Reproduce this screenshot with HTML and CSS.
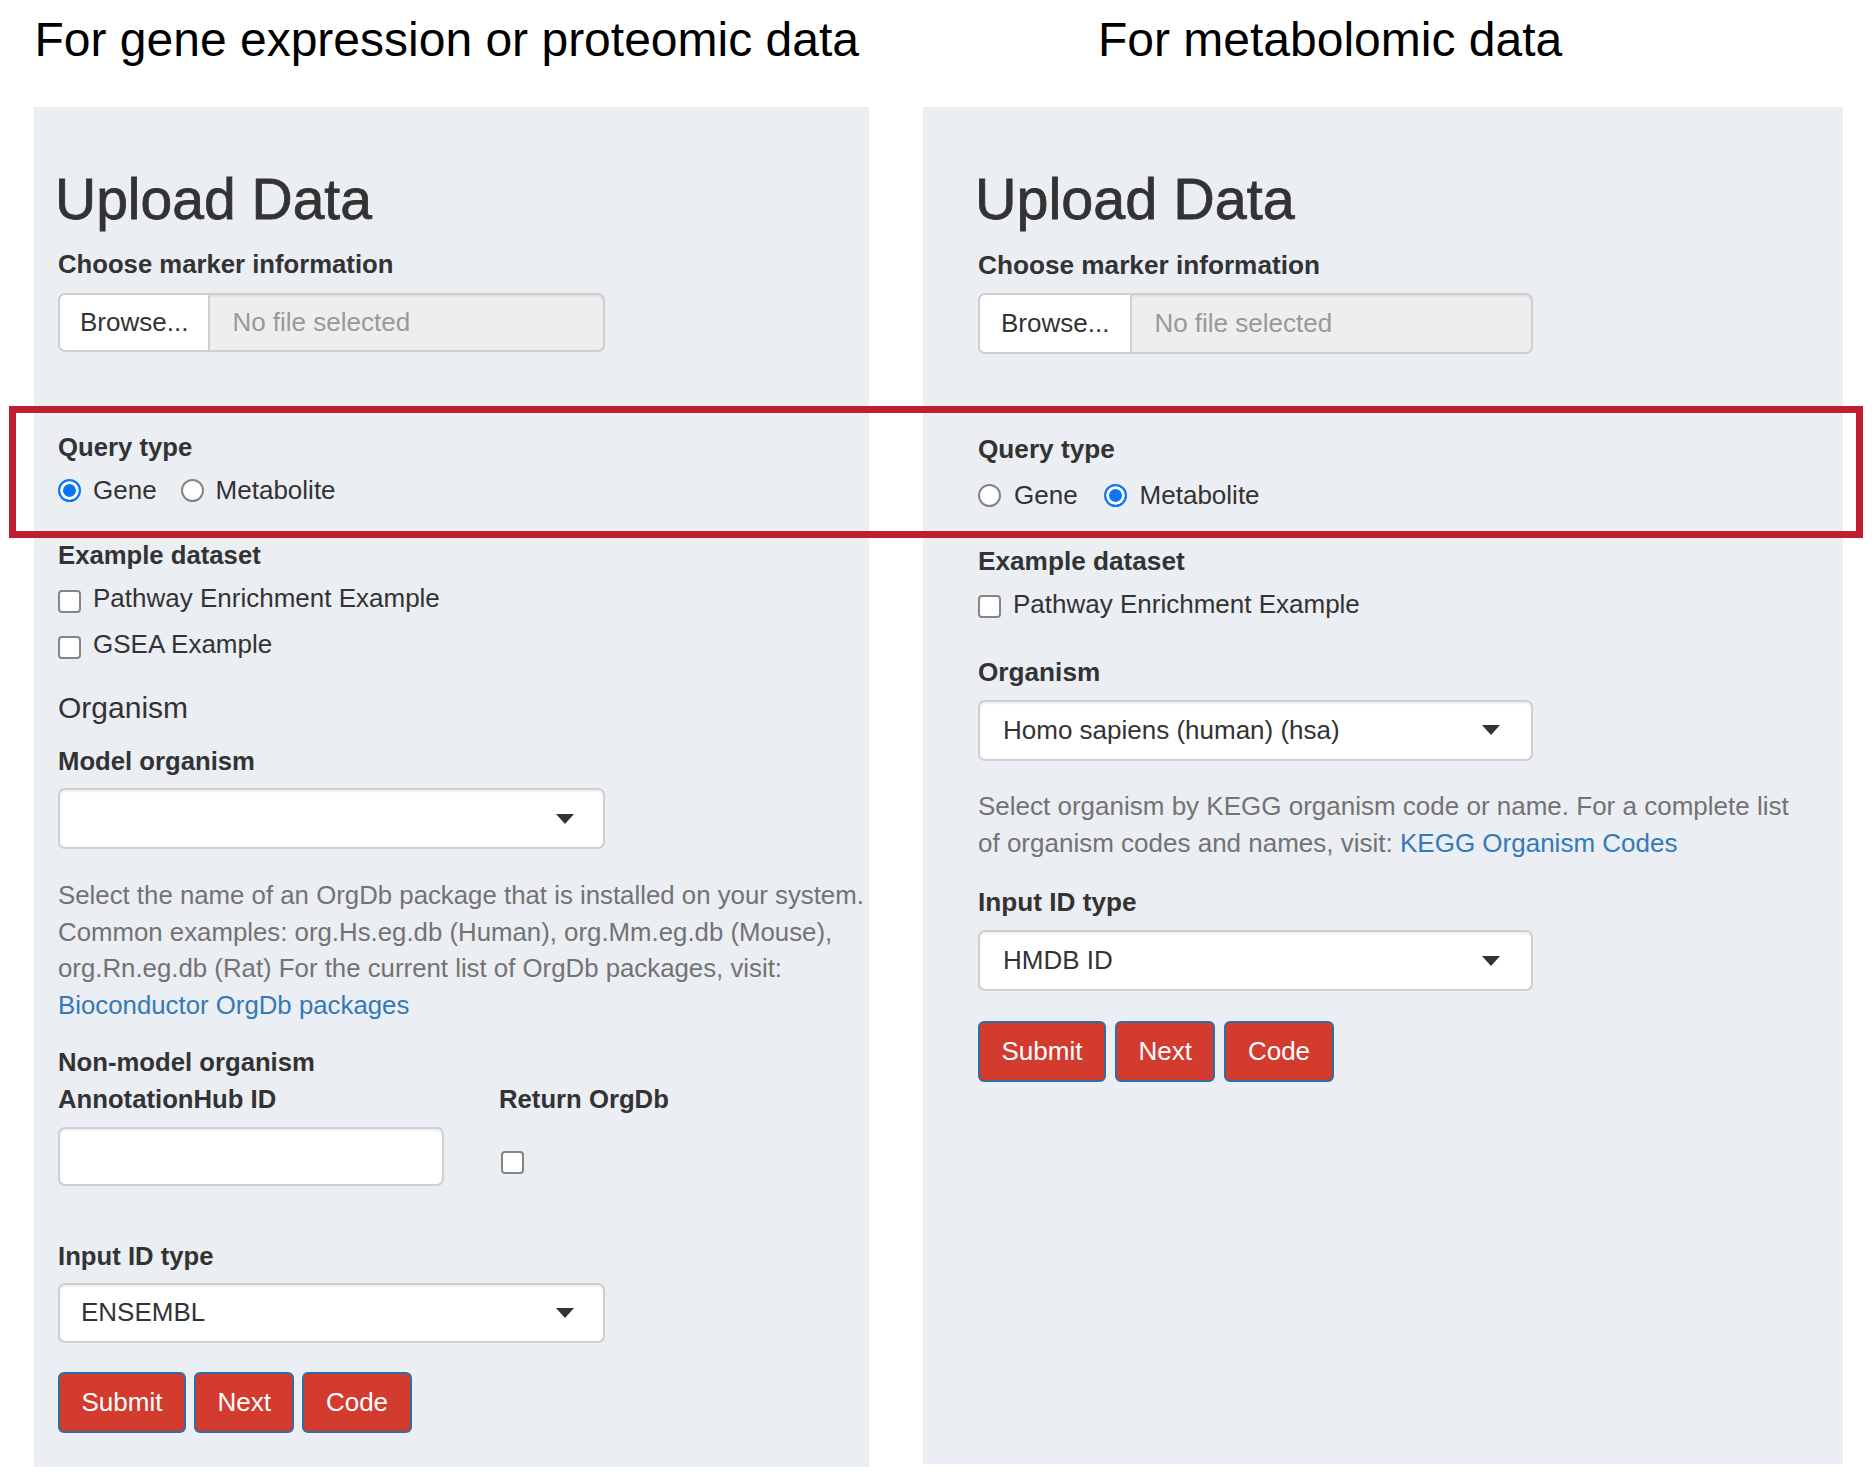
FILE: index.html
```html
<!DOCTYPE html>
<html lang="en">
<head>
<meta charset="utf-8">
<title>Upload Data</title>
<link rel="stylesheet" href="styles.css">
</head>
<body>
<div class="page">
  <div class="titles">
    <h2 class="fig-title fig-title-left">For gene expression or proteomic data</h2>
    <h2 class="fig-title fig-title-right">For metabolomic data</h2>
  </div>

  <div class="panels">
    <section class="well well-left">
      <h1 class="upload-title">Upload Data</h1>
      <label class="ctl-label l-choose">Choose marker information</label>
      <div class="file-input fi-left">
        <span class="browse-btn">Browse...</span>
        <span class="file-name">No file selected</span>
      </div>

      <label class="ctl-label l-query">Query type</label>
      <div class="radio-row rr-left">
        <label class="opt"><input type="radio" class="radio" name="q1" checked>Gene</label>
        <label class="opt"><input type="radio" class="radio" name="q1">Metabolite</label>
      </div>

      <label class="ctl-label l-example">Example dataset</label>
      <label class="opt check-row cr-1"><input type="checkbox" class="checkbox">Pathway Enrichment Example</label>
      <label class="opt check-row cr-2"><input type="checkbox" class="checkbox">GSEA Example</label>

      <h4 class="section-title">Organism</h4>
      <label class="ctl-label l-model">Model organism</label>
      <div class="select sel-left sel-model"><span class="sel-value"></span><span class="caret"></span></div>

      <p class="help help-left"><span>Select the name of an OrgDb package that is installed on your system.</span> <span>Common examples: org.Hs.eg.db (Human), org.Mm.eg.db (Mouse),</span> <span>org.Rn.eg.db (Rat) For the current list of OrgDb packages, visit:</span> <a href="#">Bioconductor OrgDb packages</a></p>

      <label class="ctl-label l-nonmodel">Non-model organism</label>
      <div class="hub-row">
        <div class="hub-col">
          <label class="ctl-label">AnnotationHub ID</label>
          <div class="text-input"></div>
        </div>
        <div class="orgdb-col">
          <label class="ctl-label">Return OrgDb</label>
          <input type="checkbox" class="checkbox orgdb-check">
        </div>
      </div>

      <label class="ctl-label l-idtype-left">Input ID type</label>
      <div class="select sel-left sel-id-left"><span class="sel-value">ENSEMBL</span><span class="caret"></span></div>

      <div class="btn-row btns-left">
        <button class="btn">Submit</button>
        <button class="btn">Next</button>
        <button class="btn">Code</button>
      </div>
    </section>

    <section class="well well-right">
      <h1 class="upload-title">Upload Data</h1>
      <label class="ctl-label r-choose">Choose marker information</label>
      <div class="file-input fi-right">
        <span class="browse-btn">Browse...</span>
        <span class="file-name">No file selected</span>
      </div>

      <label class="ctl-label l-query">Query type</label>
      <div class="radio-row rr-right">
        <label class="opt"><input type="radio" class="radio" name="q2">Gene</label>
        <label class="opt"><input type="radio" class="radio" name="q2" checked>Metabolite</label>
      </div>

      <label class="ctl-label r-example">Example dataset</label>
      <label class="opt check-row cr-r"><input type="checkbox" class="checkbox">Pathway Enrichment Example</label>

      <label class="ctl-label r-organism">Organism</label>
      <div class="select sel-right sel-org"><span class="sel-value">Homo sapiens (human) (hsa)</span><span class="caret"></span></div>

      <p class="help help-right"><span>Select organism by KEGG organism code or name. For a complete list</span> <span>of organism codes and names, visit:</span> <a href="#">KEGG Organism Codes</a></p>

      <label class="ctl-label r-idtype">Input ID type</label>
      <div class="select sel-right sel-id-right"><span class="sel-value">HMDB ID</span><span class="caret"></span></div>

      <div class="btn-row btns-right">
        <button class="btn">Submit</button>
        <button class="btn">Next</button>
        <button class="btn">Code</button>
      </div>
    </section>
  </div>

  <div class="highlight-box"></div>
</div>
</body>
</html>
```

FILE: styles.css
```css
* { box-sizing: border-box; }

html, body {
  margin: 0;
  padding: 0;
  background: #fff;
}

body {
  font-family: "Liberation Sans", Arial, Helvetica, sans-serif;
  font-size: 26px;
  line-height: 37px;
  color: #333;
}

.page {
  position: relative;
  width: 1874px;
  height: 1472px;
  padding-left: 34px;
  overflow: hidden;
}

/* ---------- figure titles ---------- */
.titles {
  display: grid;
  grid-template-columns: 835px 920px;
  column-gap: 54px;
  height: 107px;
}

.fig-title {
  margin: 12px 0 0;
  font-size: 48px;
  line-height: 55px;
  font-weight: 400;
  color: #000;
  white-space: nowrap;
}

.fig-title-left { margin-left: 0.5px; }
.fig-title-right { margin-left: 175px; }

/* ---------- panels ---------- */
.panels {
  display: grid;
  grid-template-columns: 835px 920px;
  column-gap: 54px;
  align-items: start;
}

.well {
  background: #ebeef3;
  display: flex;
  flex-direction: column;
  align-items: flex-start;
}

.well-left { padding: 61px 0 34px 24px; }
.well-right { padding: 61px 0 0 55px; height: 1357px; }

.upload-title {
  margin: 0 0 0 -3px;
  font-size: 57px;
  line-height: 62px;
  font-weight: 400;
  color: #333;
  -webkit-text-stroke: 0.8px #333;
}

.well-right .upload-title { font-size: 57.5px; }

.ctl-label {
  display: block;
  margin: 0;
  font-weight: 700;
  font-size: 25.7px;
  line-height: 37px;
  color: #333;
  white-space: nowrap;
}

.well-right .ctl-label { font-size: 26.2px; }

.section-title {
  margin: 29px 0 0;
  font-size: 30px;
  line-height: 32px;
  font-weight: 400;
  color: #333;
}

/* ---------- vertical rhythm: left panel ---------- */
.l-choose { margin-top: 16px; }
.fi-left { margin-top: 10px; width: 547px; height: 59px; }
.l-query { margin-top: 77px; }
.rr-left { margin-top: 6px; }
.l-example { margin-top: 28px; }
.cr-1 { margin-top: 6px; }
.cr-2 { margin-top: 9px; }
.l-model { margin-top: 19px; }
.sel-model { margin-top: 8px; height: 61px; }
.help-left { margin-top: 28px; width: 860px; line-height: 36.5px; font-size: 25.8px; }
.l-nonmodel { margin-top: 20.5px; }
.l-idtype-left { margin-top: 51.5px; }
.sel-id-left { margin-top: 8px; height: 60px; }
.btns-left { margin-top: 29.5px; gap: 8px; }

/* ---------- vertical rhythm: right panel ---------- */
.r-choose { margin-top: 17px; }
.fi-right { margin-top: 9px; width: 555px; height: 61px; }
.rr-right { margin-top: 8.5px; }
.r-example { margin-top: 29px; }
.cr-r { margin-top: 6px; }
.r-organism { margin-top: 31px; }
.sel-org { margin-top: 9px; height: 61px; }
.help-right { margin-top: 27px; width: 825px; line-height: 37px; }
.r-idtype { margin-top: 22.5px; }
.sel-id-right { margin-top: 9px; height: 61px; }
.btns-right { margin-top: 30px; gap: 9px; }

/* ---------- file input ---------- */
.file-input {
  display: flex;
  border: 2px solid #cfcfcf;
  border-radius: 7px;
  overflow: hidden;
  background: #eee;
  box-shadow: inset 0 2px 2px rgba(0, 0, 0, 0.06);
}

.browse-btn {
  display: flex;
  align-items: center;
  padding: 0 20px;
  background: #fff;
  border-right: 2px solid #cfcfcf;
  color: #333;
  white-space: nowrap;
}

.fi-right .browse-btn { padding: 0 21px; }

.file-name {
  display: flex;
  align-items: center;
  padding-left: 22px;
  color: #999;
  white-space: nowrap;
}

/* ---------- radio / checkbox ---------- */
.radio-row {
  display: flex;
  align-items: center;
  gap: 24px;
  height: 37px;
}

.rr-right { gap: 26px; }

.opt {
  display: flex;
  align-items: center;
  height: 37px;
  white-space: nowrap;
  font-weight: 400;
}

.radio,
.checkbox {
  -webkit-appearance: none;
  appearance: none;
  margin: 0 12px 0 0;
  width: 23px;
  height: 23px;
  flex: none;
  background: #fff;
  border: 2px solid #858585;
}

.radio { border-radius: 50%; }

.radio:checked {
  border-color: #0b75f2;
  background: #0b75f2;
  box-shadow: inset 0 0 0 3px #fff;
}

.rr-right .radio { margin-right: 13px; }

.checkbox {
  border-radius: 4px;
  margin-top: 5px;
}

/* ---------- selects & text input ---------- */
.select {
  display: flex;
  align-items: center;
  justify-content: space-between;
  background: #fff;
  border: 2px solid #cfcfcf;
  border-radius: 7px;
  padding: 0 29px 0 21px;
  box-shadow: inset 0 2px 2px rgba(0, 0, 0, 0.06);
  white-space: nowrap;
}

.sel-left { width: 547px; }
.sel-right { width: 555px; padding-left: 23px; padding-right: 31px; }

.caret {
  width: 0;
  height: 0;
  border-left: 9px solid transparent;
  border-right: 9px solid transparent;
  border-top: 10px solid #333;
}

.hub-row {
  display: flex;
  align-items: flex-start;
}

.hub-col {
  width: 441px;
  display: flex;
  flex-direction: column;
}

.text-input {
  margin-top: 9.5px;
  width: 386px;
  height: 59px;
  background: #fff;
  border: 2px solid #cfcfcf;
  border-radius: 7px;
  box-shadow: inset 0 2px 2px rgba(0, 0, 0, 0.06);
}

.orgdb-col {
  display: flex;
  flex-direction: column;
  align-items: flex-start;
}

.orgdb-check {
  margin: 33.5px 0 0 2px;
}

/* ---------- help text ---------- */
.help {
  margin-bottom: 0;
  color: #737373;
}

.help a {
  color: #337ab7;
  text-decoration: none;
}

/* ---------- buttons ---------- */
.btn-row { display: flex; }

.btn {
  height: 61px;
  padding: 0 21.5px;
  border: 2px solid #2f6ea5;
  border-radius: 6px;
  background: #d33b2f;
  color: #fff;
  font-family: "Liberation Sans", Arial, Helvetica, sans-serif;
  font-size: 26px;
  line-height: 57px;
}

/* ---------- annotation overlay ---------- */
.highlight-box {
  position: absolute;
  left: 9px;
  top: 406px;
  width: 1854px;
  height: 132px;
  border: 7px solid #bf1f2e;
  pointer-events: none;
}
```
